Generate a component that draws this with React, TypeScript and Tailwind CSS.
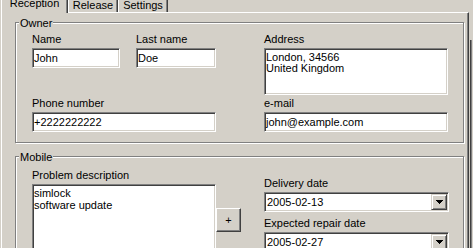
import React from "react";

const sunken =
  "border border-t-[#808080] border-l-[#808080] border-r-white border-b-white bg-white p-[1px] shadow-[inset_1px_1px_0_#404040,inset_-1px_-1px_0_#d4d0c8]";

function Label({ children, className = "" }: { children: React.ReactNode; className?: string }) {
  return <div className={`h-[13px] whitespace-nowrap ${className}`}>{children}</div>;
}

function TextBox({ value, className = "" }: { value: string; className?: string }) {
  return (
    <div className={`${sunken} mt-[2px] flex h-[20px] items-center whitespace-nowrap pl-[1px] ${className}`}>
      {value}
    </div>
  );
}

function Combo({ value }: { value: string }) {
  return (
    <div className={`${sunken} mt-[2px] flex h-[20px] w-[185px] items-center justify-between`}>
      <span className="pl-[1px]">{value}</span>
      <div className="flex h-[16px] w-[16px] items-center justify-center border border-t-[#d4d0c8] border-l-[#d4d0c8] border-r-[#404040] border-b-[#404040] bg-[#d4d0c8] shadow-[inset_1px_1px_0_#fff,inset_-1px_-1px_0_#808080]">
        <svg width="7" height="4" viewBox="0 0 7 4">
          <path d="M0 0h7v1H0zM1 1h5v1H1zM2 2h3v1H2zM3 3h1v1H3z" fill="#000" />
        </svg>
      </div>
    </div>
  );
}

function Group({ title, className = "", children }: { title: string; className?: string; children: React.ReactNode }) {
  return (
    <div className={`relative border border-[#808080] shadow-[inset_1px_1px_0_#fff,1px_1px_0_#fff] ${className}`}>
      <span className="absolute left-[3px] top-[-6px] bg-[#d4d0c8] px-[1px]">{title}</span>
      {children}
    </div>
  );
}

function Tab({ label, active = false }: { label: string; active?: boolean }) {
  if (active) {
    return (
      <div className="relative z-10 -mb-px ml-[1px] flex h-[17px] w-[67px] justify-center border-t border-l border-r border-t-white border-l-white border-r-[#404040] bg-[#d4d0c8] shadow-[inset_-1px_0_0_#808080]">
        {label}
      </div>
    );
  }
  return (
    <div className="flex h-[14px] w-[50px] justify-center border-t border-l border-r border-t-white border-l-white border-r-[#404040] bg-[#d4d0c8] shadow-[inset_-1px_0_0_#808080]">
      {label}
    </div>
  );
}

export default function App() {
  return (
    <div className="flex h-[248px] w-[473px] overflow-hidden bg-[#d4d0c8] font-['Liberation_Sans',Arial,sans-serif] text-[11px] leading-[13px] text-black">
      <div className="w-[469px] shrink-0">
        <div className="flex h-[12px] items-end">
          <Tab label="Reception" active />
          <Tab label="Release" />
          <Tab label="Settings" />
        </div>

        <div className="ml-[1px] h-[300px] w-[468px] border-t border-l border-r border-t-white border-l-white border-r-[#404040] pl-[13px] pt-[9px] shadow-[inset_-1px_0_0_#808080]">
          <Group title="Owner" className="h-[121px] w-[449px] pl-[16px] pt-[10px]">
            <div className="grid grid-cols-[184px_184px] gap-x-[48px]">
              <div>
                <div className="flex gap-[16px]">
                  <div className="w-[88px]">
                    <Label>Name</Label>
                    <TextBox value="John" />
                  </div>
                  <div className="w-[80px]">
                    <Label>Last name</Label>
                    <TextBox value="Doe" />
                  </div>
                </div>
                <Label className="mt-[29px]">Phone number</Label>
                <TextBox value="+2222222222" />
              </div>
              <div>
                <Label>Address</Label>
                <div className={`${sunken} mt-[2px] h-[47px] pt-[3px] leading-[11px]`}>
                  <div>London, 34566</div>
                  <div>United Kingdom</div>
                </div>
                <Label className="mt-[2px]">e-mail</Label>
                <TextBox value="john@example.com" />
              </div>
            </div>
          </Group>

          <Group title="Mobile" className="mt-[13px] h-[150px] w-[449px] pl-[16px] pt-[12px]">
            <div className="flex">
              <div className="w-[184px]">
                <Label>Problem description</Label>
                <div className={`${sunken} mt-[2px] h-[80px] pt-[2px] leading-[12px]`}>
                  <div>simlock</div>
                  <div>software update</div>
                </div>
              </div>
              <button className="mt-[39px] flex h-[24px] w-[25px] items-center justify-center border border-t-white border-l-white border-r-[#404040] border-b-[#404040] bg-[#d4d0c8] shadow-[inset_-1px_-1px_0_#808080]">
                +
              </button>
              <div className="ml-[23px] w-[185px] pt-[8px]">
                <Label>Delivery date</Label>
                <Combo value="2005-02-13" />
                <Label className="mt-[5px]">Expected repair date</Label>
                <Combo value="2005-02-27" />
              </div>
            </div>
          </Group>
        </div>
      </div>
      <div className="pl-[1px] pt-[40px]">
        <div className="h-full w-[2px] border-l border-l-[#404040] bg-[#808080]" />
      </div>
    </div>
  );
}
